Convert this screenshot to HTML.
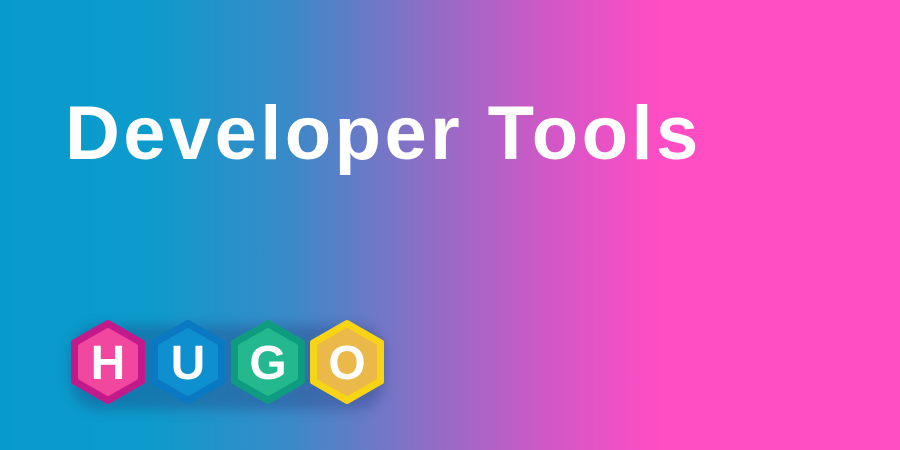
<!DOCTYPE html>
<html><head><style>
html,body{margin:0;padding:0}
body{width:900px;height:450px;overflow:hidden;position:relative;
background:linear-gradient(90deg,#079bcb 0px,#0d9bcc 150px,#3a8ac8 290px,#8a6fc6 420px,#d257c6 550px,#ff4dc4 660px,#ff4dc4 900px);}
h1{position:absolute;left:65px;margin:0;font:bold 76px/1 "Liberation Sans",sans-serif;color:#fff;letter-spacing:3.4px;white-space:nowrap;top:104px;line-height:55px;height:55px}
h1 span{display:block;margin-top:2px}
svg{position:absolute;left:0;top:0}
</style></head><body>
<h1><span>Developer Tools</span></h1>
<svg width="900" height="450" viewBox="0 0 900 450">
<defs>
<filter id="sh" x="-50%" y="-50%" width="200%" height="200%"><feGaussianBlur stdDeviation="6"/></filter>
</defs>
<g opacity="0.35" filter="url(#sh)"><rect x="70" y="325" width="315" height="85" rx="30" fill="#243a7a"/></g>
<g transform="translate(108,362)"><path d="M0,-39 L34,-19.5 L34,19.5 L0,39 L-34,19.5 L-34,-19.5 Z" fill="#c21a8a" stroke="#c21a8a" stroke-width="6" stroke-linejoin="round"/><path d="M0,-32 L28,-16 L28,16 L0,32 L-28,16 L-28,-16 Z" fill="#f2479e" stroke="#f2479e" stroke-width="4" stroke-linejoin="round"/><text x="0" y="17" text-anchor="middle" font-family="Liberation Sans,sans-serif" font-weight="bold" font-size="48" fill="#fff">H</text></g>
<g transform="translate(188,362)"><path d="M0,-39 L34,-19.5 L34,19.5 L0,39 L-34,19.5 L-34,-19.5 Z" fill="#0a78c2" stroke="#0a78c2" stroke-width="6" stroke-linejoin="round"/><path d="M0,-32 L28,-16 L28,16 L0,32 L-28,16 L-28,-16 Z" fill="#0e90d0" stroke="#0e90d0" stroke-width="4" stroke-linejoin="round"/><text x="0" y="17" text-anchor="middle" font-family="Liberation Sans,sans-serif" font-weight="bold" font-size="48" fill="#fff">U</text></g>
<g transform="translate(268,362)"><path d="M0,-39 L34,-19.5 L34,19.5 L0,39 L-34,19.5 L-34,-19.5 Z" fill="#0f9b80" stroke="#0f9b80" stroke-width="6" stroke-linejoin="round"/><path d="M0,-32 L28,-16 L28,16 L0,32 L-28,16 L-28,-16 Z" fill="#24b88e" stroke="#24b88e" stroke-width="4" stroke-linejoin="round"/><text x="0" y="17" text-anchor="middle" font-family="Liberation Sans,sans-serif" font-weight="bold" font-size="48" fill="#fff">G</text></g>
<g transform="translate(347,362)"><path d="M0,-39 L34,-19.5 L34,19.5 L0,39 L-34,19.5 L-34,-19.5 Z" fill="#f7d414" stroke="#f7d414" stroke-width="6" stroke-linejoin="round"/><path d="M0,-32 L28,-16 L28,16 L0,32 L-28,16 L-28,-16 Z" fill="#ebb84a" stroke="#ebb84a" stroke-width="4" stroke-linejoin="round"/><text x="0" y="17" text-anchor="middle" font-family="Liberation Sans,sans-serif" font-weight="bold" font-size="48" fill="#fff">O</text></g>
</svg>
</body></html>
